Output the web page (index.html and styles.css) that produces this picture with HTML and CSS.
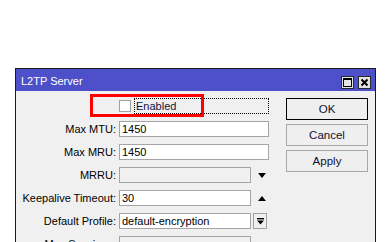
FILE: index.html
```html
<!DOCTYPE html>
<html>
<head>
<meta charset="utf-8">
<link rel="stylesheet" href="styles.css">
</head>
<body>
<div class="window">
  <div class="titlebar">
    <span class="title">L2TP Server</span>
    <div class="tbtns">
      <span class="tbtn"><svg width="11" height="11" viewBox="0 0 11 11"><rect x="1.5" y="1.5" width="8" height="8" fill="none" stroke="#000" stroke-width="1"/><rect x="1" y="1" width="9" height="2" fill="#000"/></svg></span>
      <span class="tbtn"><svg width="11" height="11" viewBox="0 0 11 11"><path d="M2.5 2.5 L8.5 8.5 M8.5 2.5 L2.5 8.5" stroke="#000" stroke-width="2"/></svg></span>
    </div>
  </div>
  <div class="content">
    <div class="form">
      <span class="label"></span>
      <div class="field check-field">
        <span class="checkbox"></span>
        <span class="focus">Enabled</span>
      </div>

      <span class="label">Max MTU:</span>
      <div class="field"><span class="input wide">1450</span></div>

      <span class="label">Max MRU:</span>
      <div class="field"><span class="input wide">1450</span></div>

      <span class="label">MRRU:</span>
      <div class="field"><span class="input narrow disabled"></span><span class="arrow down"></span></div>

      <span class="label">Keepalive Timeout:</span>
      <div class="field"><span class="input narrow">30</span><span class="arrow up"></span></div>

      <span class="label">Default Profile:</span>
      <div class="field"><span class="input narrow">default-encryption</span><span class="dropbtn"><svg width="9" height="9" viewBox="0 0 9 9"><rect x="1" y="1" width="7" height="1.4" fill="#000"/><path d="M1 3.5 H8 L4.5 7.5 Z" fill="#000"/></svg></span></div>

      <span class="label">Max Sessions:</span>
      <div class="field"><span class="input narrow disabled"></span></div>
    </div>
    <div class="buttons">
      <span class="btn default">OK</span>
      <span class="btn">Cancel</span>
      <span class="btn">Apply</span>
    </div>
  </div>
  <div class="highlight"></div>
</div>
</body>
</html>
```

FILE: styles.css
```css
html, body {
  margin: 0;
  padding: 0;
  background: #ffffff;
  overflow: hidden;
  height: 242px;
}
body {
  font-family: "Liberation Sans", Arial, sans-serif;
  font-size: 11px;
  color: #000;
}
.window {
  position: relative;
  box-sizing: border-box;
  margin: 68px 0 0 15px;
  width: 361px;
  height: 260px;
  border: 1px solid #1a1a1a;
  background: #f0f0f0;
}
.titlebar {
  height: 22px;
  background: #4d50c8;
  display: flex;
  align-items: center;
  justify-content: space-between;
  padding: 0 4px 0 5px;
}
.title {
  color: #fff;
  font-size: 11px;
  padding-top: 1px;
}
.tbtns {
  display: flex;
  gap: 4px;
  margin-top: 4px;
}
.tbtn {
  box-sizing: border-box;
  width: 13px;
  height: 13px;
  background: #e4e4e4;
  border: 1px solid #2a2a2a;
  display: flex;
  align-items: center;
  justify-content: center;
}
.tbtn svg { display: block; }
.content {
  display: flex;
  padding: 7px 7px 0 0;
}
.form {
  display: grid;
  grid-template-columns: 100px 150px;
  grid-auto-rows: 16px;
  column-gap: 3px;
  row-gap: 7px;
}
.label {
  text-align: right;
  line-height: 16px;
  white-space: nowrap;
}
.field {
  display: flex;
  align-items: center;
  height: 16px;
}
.check-field {
  gap: 3px;
}
.checkbox {
  box-sizing: border-box;
  width: 12px;
  height: 12px;
  background: #fff;
  border: 1px solid #a0a0a0;
}
.focus {
  box-sizing: border-box;
  flex: 1;
  height: 16px;
  line-height: 14px;
  border: 1px dotted #000;
  padding-left: 1px;
  color: #101040;
}
.input {
  box-sizing: border-box;
  height: 16px;
  line-height: 14px;
  border: 1px solid #a5a5a5;
  background: #fff;
  padding-left: 2px;
  white-space: nowrap;
  overflow: hidden;
}
.input.wide { width: 150px; }
.input.narrow { width: 132px; }
.input.disabled { background: #f0f0f0; }
.arrow {
  width: 0;
  height: 0;
  margin-left: 7px;
  border-left: 4px solid transparent;
  border-right: 4px solid transparent;
}
.arrow.down { border-top: 5px solid #000; }
.arrow.up { border-bottom: 5px solid #000; }
.dropbtn {
  box-sizing: border-box;
  width: 14px;
  height: 16px;
  margin-left: 2px;
  border: 1px solid #a0a0a0;
  background: #f0f0f0;
  display: flex;
  align-items: center;
  justify-content: center;
}
.dropbtn svg { display: block; }
.buttons {
  margin-left: auto;
  width: 82px;
  display: flex;
  flex-direction: column;
  gap: 4px;
}
.btn {
  box-sizing: border-box;
  height: 22px;
  border: 1px solid #a8a8a8;
  background: #efefef;
  display: flex;
  align-items: center;
  justify-content: center;
  color: #101030;
  font-size: 11.5px;
}
.btn.default {
  border-color: #000;
}
.highlight {
  position: absolute;
  box-sizing: border-box;
  left: 74px;
  top: 25px;
  width: 114px;
  height: 23px;
  border: 3px solid #ff0000;
}
```
